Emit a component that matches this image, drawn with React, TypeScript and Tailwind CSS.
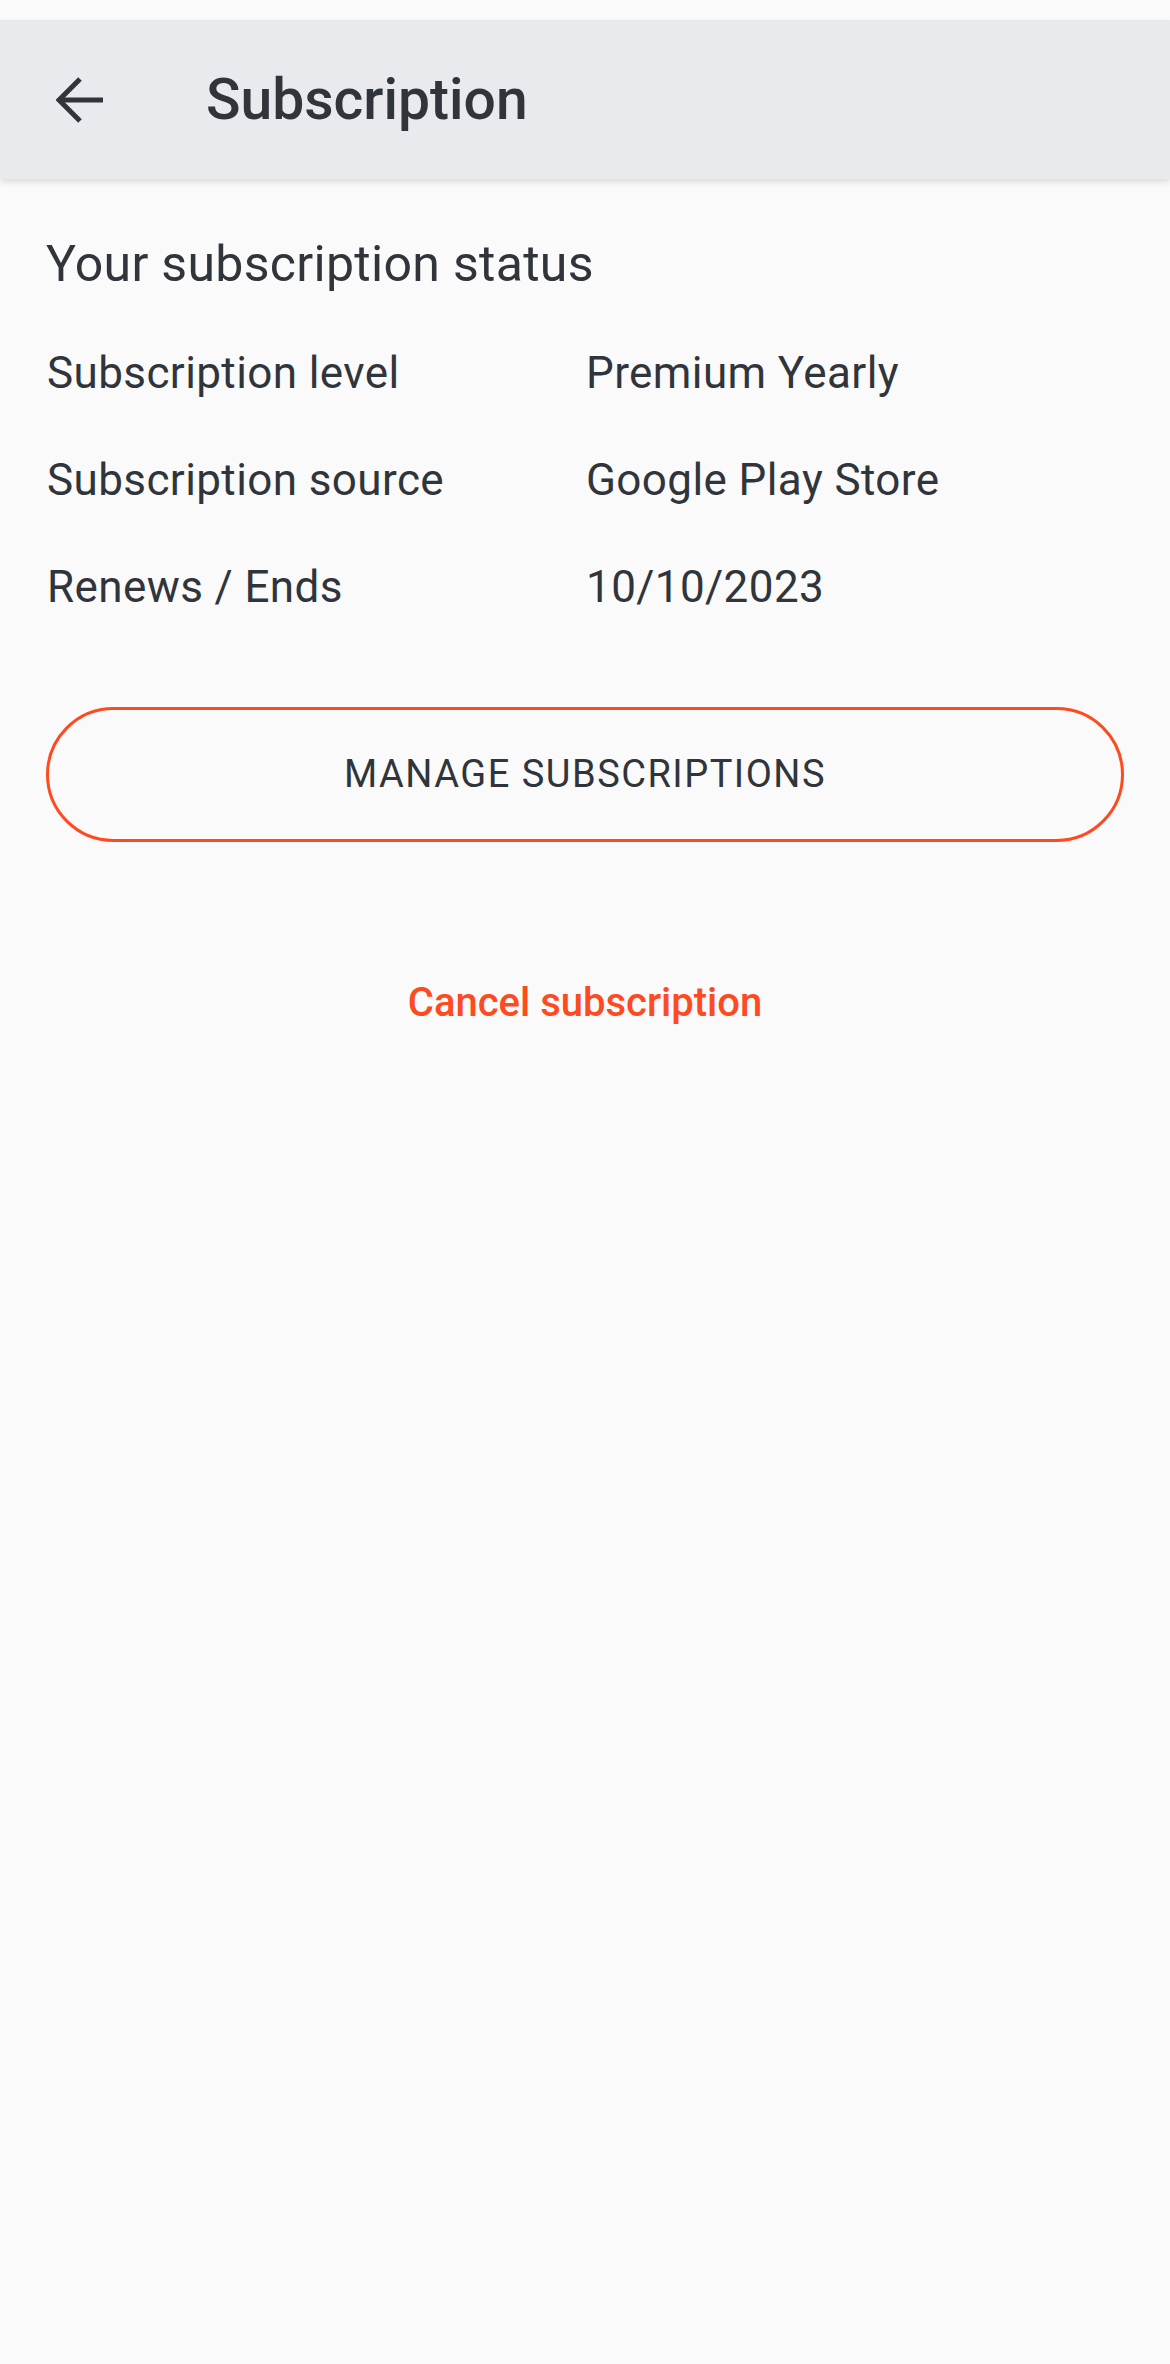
import React from 'react';

const rows = [
  { label: 'Subscription level', value: 'Premium Yearly' },
  { label: 'Subscription source', value: 'Google Play Store' },
  { label: 'Renews / Ends', value: '10/10/2023' },
];

export default function App() {
  return (
    <div className="min-h-[2364px] w-[1170px] bg-[#fafafa] font-['Roboto',sans-serif] text-[#30343b]">
      {/* status bar strip */}
      <div className="h-[20px] bg-[#fafafa]" />

      {/* Toolbar */}
      <div className="relative z-10 flex h-[159px] items-center bg-[#e9eaee] shadow-[0_3px_6px_rgba(0,0,0,0.12)]">
        <button className="ml-[56px] flex items-center">
          <svg width="48" height="46" viewBox="0 0 48 46" fill="none" stroke="#30343b" strokeWidth="5">
            <path d="M5 23H47" />
            <path d="M24 2L3 23L24 44" strokeLinejoin="miter" />
          </svg>
        </button>
        <h1 className="ml-[102px] text-[57px] font-medium leading-none">Subscription</h1>
      </div>

      {/* Content */}
      <div className="px-[46px]">
        <h2 className="mt-[57px] text-[50px] leading-[56px] tracking-[0.3px]">Your subscription status</h2>

        <div className="mt-[56px] flex flex-col gap-[57px]">
          {rows.map(r => (
            <div key={r.label} className="grid grid-cols-[540px_1fr] text-[44px] leading-[50px] tracking-[0.4px]">
              <span className="pl-[1px]">{r.label}</span>
              <span>{r.value}</span>
            </div>
          ))}
        </div>

        <button className="mt-[95px] flex h-[135px] w-full items-center justify-center rounded-full border-[3px] border-[#ff4a1f] text-[38px] font-normal tracking-[1.5px]">
          MANAGE SUBSCRIPTIONS
        </button>

        <div className="mt-[139px] text-center text-[40px] font-medium leading-[44px] text-[#ff4a1f]">
          Cancel subscription
        </div>
      </div>
    </div>
  );
}
